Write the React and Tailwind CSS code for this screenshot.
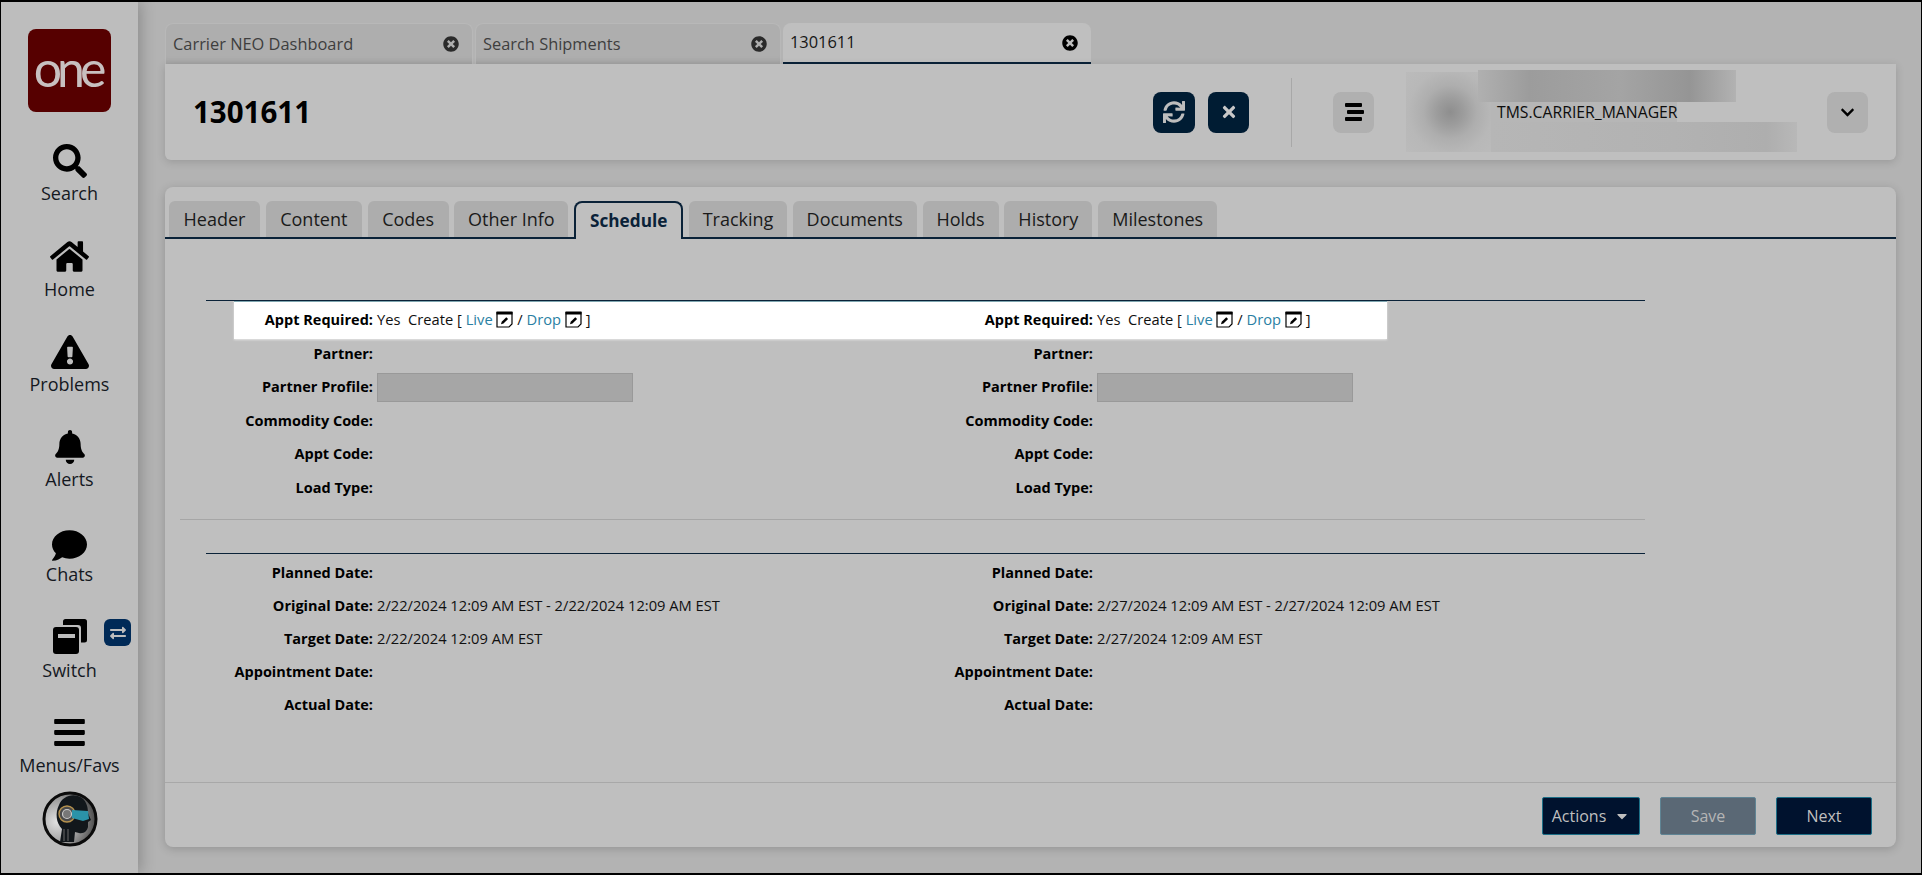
import React from "react";
import { FaSearch, FaHome, FaExclamationTriangle, FaBell, FaComment, FaBars, FaSync, FaTimes, FaExchangeAlt, FaChevronDown, FaTimesCircle, FaCaretDown } from "react-icons/fa";

const SwitchIcon = () => (
  <svg width="36" height="36" viewBox="0 0 36 36">
    <path d="M11 2.5a2.5 2.5 0 0 1 2.5-2.5H32.5A2.5 2.5 0 0 1 35 2.5V21a2.5 2.5 0 0 1-2.5 2.5H29V9a3 3 0 0 0-3-3H11z" fill="#000" />
    <rect x="1" y="8" width="26" height="27" rx="3" fill="#000" />
    <rect x="6" y="15" width="17" height="4" fill="#bdbdbd" />
  </svg>
);

const ListIcon = () => (
  <svg width="20" height="18" viewBox="0 0 20 18">
    <rect x="1" y="0" width="17" height="4" rx="1" fill="#000" />
    <rect x="3" y="7" width="17" height="4" rx="1" fill="#000" />
    <rect x="1" y="14" width="17" height="4" rx="1" fill="#000" />
  </svg>
);

const EditIcon = () => (
  <svg width="17" height="17" viewBox="0 0 17 17" className="inline-block align-[-3px]">
    <path d="M1 1.5h15v11.5l-3 3H1z" fill="none" stroke="#000" strokeWidth="1.2" />
    <rect x="0.5" y="0.5" width="16" height="3" fill="#000" />
    <path d="M5 13.2l.7-2.5 4.6-4.5 1.8 1.8-4.6 4.5z" fill="#000" />
  </svg>
);

const Robot = () => (
  <svg width="56" height="56" viewBox="0 0 56 56">
    <defs>
      <radialGradient id="rg" cx="25%" cy="55%" r="80%">
        <stop offset="0%" stopColor="#e2e2e2" />
        <stop offset="55%" stopColor="#9c9c9c" />
        <stop offset="100%" stopColor="#3c3c3c" />
      </radialGradient>
    </defs>
    <circle cx="28" cy="28" r="26" fill="url(#rg)" stroke="#0b0b0b" strokeWidth="3" />
    <path d="M17 14C20 5 32 1 40 7C45 11 46 17 46 22L49 29L46 31L46 36C45 40 42 43 37 42L33 41L32 51H18L20 38C14 32 13 22 17 14z" fill="#12171b" />
    <path d="M22 38v12M26 38v12" stroke="#6b6b6b" strokeWidth="1" />
    <circle cx="25" cy="23" r="8" fill="#4a4a4a" stroke="#b6924e" strokeWidth="1.4" />
    <circle cx="25" cy="23" r="4.5" fill="#777" stroke="#c9c9c9" strokeWidth="1.2" />
    <path d="M30 19L46 20L47 28L41 30L30 27z" fill="#2b93a8" />
  </svg>
);

const sideItems = [
  { label: "Search", icon: <FaSearch size={34} color="#000" /> },
  { label: "Home", icon: <FaHome size={39} color="#000" /> },
  { label: "Problems", icon: <FaExclamationTriangle size={38} color="#000" /> },
  { label: "Alerts", icon: <FaBell size={34} color="#000" /> },
  { label: "Chats", icon: <FaComment size={35} color="#000" className="translate-y-1" /> },
  { label: "Switch", icon: <SwitchIcon />, badge: true },
  { label: "Menus/Favs", icon: <FaBars size={35} color="#000" /> },
];

const pageTabs = [
  { label: "Carrier NEO Dashboard", w: "w-[308px]" },
  { label: "Search Shipments", w: "w-[306px]" },
];

const innerTabs = [
  { label: "Header", w: "w-[91px]" },
  { label: "Content", w: "w-[96px]" },
  { label: "Codes", w: "w-[81px]" },
  { label: "Other Info", w: "w-[114px]" },
  { label: "Schedule", w: "w-[109px]", active: true },
  { label: "Tracking", w: "w-[98px]" },
  { label: "Documents", w: "w-[124px]" },
  { label: "Holds", w: "w-[76px]" },
  { label: "History", w: "w-[88px]" },
  { label: "Milestones", w: "w-[119px]" },
];

const Row = ({ label, h = "h-[33.5px]", children }) => (
  <div className={`flex items-center ${h}`}>
    <div className="w-[167px] shrink-0 text-right text-[14.5px] font-bold text-black leading-none whitespace-nowrap">{label}</div>
    <div className="ml-[4px] text-[14.7px] text-[#101010] leading-none whitespace-nowrap flex items-center">{children}</div>
  </div>
);

const ApptValue = () => (
  <span className="relative top-[-1px]">
    Yes&nbsp;&nbsp;Create [ <span className="text-[#2a7fa3]">Live</span> <EditIcon /> / <span className="text-[#2a7fa3]">Drop</span> <EditIcon /> ]
  </span>
);

const DetailCol = () => (
  <div className="pt-[2.5px]">
    <Row label="Appt Required:"><ApptValue /></Row>
    <Row label="Partner:" />
    <Row label="Partner Profile:">
      <div className="w-[256px] h-[29px] bg-[#a6a6a6] border border-[#999999]" />
    </Row>
    <Row label="Commodity Code:" />
    <Row label="Appt Code:" />
    <Row label="Load Type:" />
  </div>
);

const DateCol = ({ d }) => (
  <div className="pt-[3px]">
    <Row h="h-[33px]" label="Planned Date:" />
    <Row h="h-[33px]" label="Original Date:"><span className="relative top-[-1px]">{`${d} 12:09 AM EST - ${d} 12:09 AM EST`}</span></Row>
    <Row h="h-[33px]" label="Target Date:"><span className="relative top-[-1px]">{`${d} 12:09 AM EST`}</span></Row>
    <Row h="h-[33px]" label="Appointment Date:" />
    <Row h="h-[33px]" label="Actual Date:" />
  </div>
);

export default function App() {
  return (
    <div className="w-[1922px] h-[875px] box-border border-t-2 border-b-2 border-x border-black bg-[#b3b3b3] flex overflow-hidden font-['Open_Sans',sans-serif]">
      <aside className="w-[137px] shrink-0 bg-[#bdbdbd] shadow-[3px_0_14px_rgba(0,0,0,0.22)] z-10 flex flex-col items-center">
        <div className="mt-[27px] w-[83px] h-[83px] rounded-[8px] bg-[#560000] flex items-center justify-center overflow-hidden">
          <span className="font-['Lato',sans-serif] font-normal text-[50px] leading-none tracking-[-5px] text-[#c8c0c0] relative left-[-2px] top-[-3px]">one</span>
        </div>
        <nav className="mt-[19px] flex flex-col gap-[21.3px] w-full">
          {sideItems.map((it) => (
            <div key={it.label} className="relative h-[74px] pt-[12px] flex flex-col items-center text-[18px] leading-[24px] text-[#14181f]">
              <div className="h-[36px] flex items-center justify-center">{it.icon}</div>
              <div className="mt-[2.5px]">{it.label}</div>
              {it.badge && (
                <div className="absolute left-[103px] top-[12px] w-[27px] h-[27px] rounded-[6px] bg-[#002a57] flex items-center justify-center">
                  <FaExchangeAlt size={16} color="#bdbdbd" />
                </div>
              )}
            </div>
          ))}
        </nav>
        <div className="mt-[14px]"><Robot /></div>
      </aside>

      <main className="flex-1 pl-[27px] pr-[25px] pt-[21px] flex flex-col">
        <div className="h-[41px] flex gap-[2px]">
          {pageTabs.map((t) => (
            <div key={t.label} className={`${t.w} h-full rounded-t-[8px] bg-[#aeaeae] shadow-[inset_0_-8px_8px_-8px_rgba(0,0,0,0.12)] border border-b-0 border-[#b8b8b8] flex items-center justify-between pl-[7px] pr-[13px] text-[16.4px] text-[#3e3e3e]`}>
              <span>{t.label}</span>
              <FaTimesCircle size={16} color="#2a2a2a" />
            </div>
          ))}
          <div className="w-[308px] h-full rounded-t-[8px] bg-[#bfbfbf] border-b-2 border-[#0a2238] flex items-center justify-between pl-[7px] pr-[13px] text-[16.4px] text-[#161616]">
            <span>1301611</span>
            <FaTimesCircle size={16} color="#000" />
          </div>
        </div>

        <header className="h-[96px] bg-[#bfbfbf] rounded-b-[6px] shadow-[0_2px_8px_rgba(0,0,0,0.15)] flex items-center pl-[28px] pr-[28px]">
          <h1 className="text-[29.5px] font-bold text-black leading-none">1301611</h1>
          <div className="ml-auto flex items-center">
            <button className="w-[42px] h-[41px] rounded-[8px] bg-[#001c33] flex items-center justify-center"><FaSync size={22} color="#bdbdbd" /></button>
            <button className="ml-[13px] w-[41px] h-[41px] rounded-[8px] bg-[#001c33] flex items-center justify-center"><FaTimes size={18} color="#c8c8c8" /></button>
            <div className="ml-[42px] w-px h-[69px] bg-[#a8a8a8]" />
            <button className="ml-[41px] w-[41px] h-[41px] rounded-[8px] bg-[#b0b0b0] flex items-center justify-center"><ListIcon /></button>
            <div className="ml-[32px] flex items-start">
              <div className="w-[85px] h-[80px] bg-[radial-gradient(circle_at_52%_50%,#8e8e8e_0%,#9c9c9c_22%,#aeaeae_45%,#b8b8b8_70%,#bbbbbb_100%)]" />
              <div className="w-[306px] h-[80px] flex flex-col">
                <div className="-ml-[13px] -mt-[2px] w-[258px] h-[32px] bg-[linear-gradient(90deg,#b0b0b0_0%,#9c9c9c_20%,#a4a4a4_55%,#959595_82%,#b2b2b2_100%)]" />
                <div className="h-[20px] w-[186px] bg-[#b6b6b6] pl-[6px] text-[15.75px] leading-[20px] text-[#0d0d0d] whitespace-nowrap">TMS.CARRIER_MANAGER</div>
                <div className="h-[30px] bg-[linear-gradient(90deg,#b6b6b6_0%,#b2b2b2_60%,#aeaeae_90%,#b8b8b8_100%)]" />
              </div>
            </div>
            <button className="ml-[30px] w-[41px] h-[41px] rounded-[8px] bg-[#b0b0b0] flex items-center justify-center"><FaChevronDown size={15} color="#000" /></button>
          </div>
        </header>

        <section className="mt-[27px] h-[660px] bg-[#bfbfbf] rounded-[8px] shadow-[0_2px_10px_rgba(0,0,0,0.18)] flex flex-col">
          <div className="pt-[14px] pl-[4px] flex gap-[5.8px] border-b-2 border-[#0a2238] h-[52px]">
            {innerTabs.map((t) =>
              t.active ? (
                <div key={t.label} className={`${t.w} h-[38px] -mb-[2px] rounded-t-[8px] border-2 border-b-0 border-[#0a2238] bg-[#bfbfbf] flex items-center justify-center text-[17.2px] font-bold text-[#0a2238] z-10`}>{t.label}</div>
              ) : (
                <div key={t.label} className={`${t.w} h-[36px] rounded-t-[6px] bg-[#adadad] flex items-center justify-center text-[18px] text-[#1a1a1a]`}>{t.label}</div>
              )
            )}
          </div>

          <div className="flex-1 relative pt-[61px]">
            <div className="absolute left-[69px] top-[61px] w-[1153px] h-[39px] bg-white border-t-2 border-[#7fa6b0] shadow-[0_1px_2px_rgba(255,255,255,0.6)]" />
            <div className="relative ml-[41px] grid grid-cols-[720px_719px]">
              <div className="border-t border-[#0a2238]"><DetailCol /></div>
              <div className="border-t border-[#0a2238]"><DetailCol /></div>
            </div>
            <div className="mt-[14px] ml-[15px] w-[1465px] h-px bg-[#a6a6a6]" />
            <div className="mt-[33px] ml-[41px] grid grid-cols-[720px_719px]">
              <div className="border-t border-[#0a2238]"><DateCol d="2/22/2024" /></div>
              <div className="border-t border-[#0a2238]"><DateCol d="2/27/2024" /></div>
            </div>
          </div>

          <footer className="h-[65px] border-t border-[#a8a8a8] flex items-center justify-end gap-[20px] pr-[24px] pt-[2px] text-[16px]">
            <button className="w-[98px] h-[38px] rounded-[2px] bg-[#00122e] border border-[#1c6f87] text-[#bfbfbf] flex items-center justify-center gap-[8px]">Actions <FaCaretDown size={16} /></button>
            <button className="w-[96px] h-[38px] rounded-[2px] bg-[#5a6875] border border-[#5f8494] text-[#b5b5b5]">Save</button>
            <button className="w-[96px] h-[38px] rounded-[2px] bg-[#00122e] border border-[#1c6f87] text-[#bfbfbf]">Next</button>
          </footer>
        </section>
      </main>
    </div>
  );
}
